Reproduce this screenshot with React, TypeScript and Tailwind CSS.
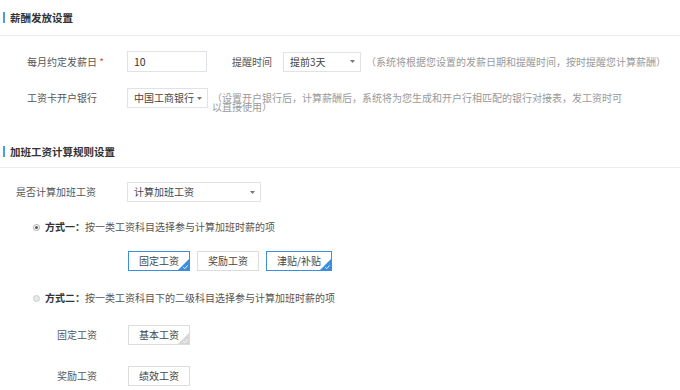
import React from 'react';

const labelCls = 'text-[10px] leading-[10px] text-[#555]';

function SectionTitle({ title, className = '' }: { title: string; className?: string }) {
  return (
    <div className={`flex items-center border-b border-[#ececec] pl-[3px] ${className}`}>
      <span className="h-[11px] w-[2px] bg-[#4a9de0]" />
      <span className="ml-[5px] text-[10.5px] font-bold leading-[11px] text-[#333]">{title}</span>
    </div>
  );
}

function Arrow() {
  return (
    <svg width="5" height="3" viewBox="0 0 5 3" className="shrink-0">
      <polygon points="0,0 5,0 2.5,3" fill="#777" />
    </svg>
  );
}

function Select({ value, width }: { value: string; width: string }) {
  return (
    <div
      className={`flex h-[20px] items-center justify-between border border-[#dfe3e8] bg-white pl-[6px] pr-[5px] ${width}`}
    >
      <span className="text-[10px] leading-[10px] text-[#444]">{value}</span>
      <Arrow />
    </div>
  );
}

function Corner({ color }: { color: string }) {
  return (
    <svg width="11" height="11" viewBox="0 0 11 11" className="absolute bottom-0 right-0">
      <polygon points="11,0 11,11 0,11" fill={color} />
      <path d="M5.2 8.3 L6.8 9.6 L9.6 6.4" stroke="#fff" strokeWidth="0.9" fill="none" />
    </svg>
  );
}

function Tag({
  text,
  state = 'off',
}: {
  text: string;
  state?: 'on' | 'off' | 'dim';
}) {
  const border = state === 'on' ? 'border-[#3c8ddc]' : 'border-[#dcdcdc]';
  return (
    <div
      className={`relative flex h-[20px] items-center justify-center border bg-white px-[10px] ${border}`}
    >
      <span className="text-[10px] leading-[10px] text-[#444]">{text}</span>
      {state === 'on' && <Corner color="#3c8ddc" />}
      {state === 'dim' && <Corner color="#d6d6d6" />}
    </div>
  );
}

function Radio({ checked }: { checked: boolean }) {
  return (
    <span
      className={`flex h-[7px] w-[7px] items-center justify-center rounded-full border ${
        checked ? 'border-[#aaa] bg-white' : 'border-[#ccc] bg-[#e8e8e8]'
      }`}
    >
      {checked && <span className="h-[3px] w-[3px] rounded-full bg-[#555]" />}
    </span>
  );
}

export default function App() {
  return (
    <div className="h-[390px] w-[680px] overflow-hidden bg-white font-['Noto_Sans_CJK_SC','Liberation_Sans',sans-serif]">
      <SectionTitle title="薪酬发放设置" className="h-[36px]" />

      {/* 每月约定发薪日 */}
      <div className="mt-[15px] flex h-[21px] items-center">
        <div className={`w-[127px] pl-[27px] ${labelCls}`}>
          每月约定发薪日 <span className="text-[#e5484d]">*</span>
        </div>
        <div className="flex h-[21px] w-[80px] items-center border border-[#dfe3e8] pl-[6px]">
          <span className="text-[10.5px] leading-[10px] text-[#333]">10</span>
        </div>
        <span className={`ml-[25px] mr-[11px] ${labelCls}`}>提醒时间</span>
        <Select value="提前3天" width="w-[78px]" />
        <span className="ml-[5px] text-[10px] leading-[10px] text-[#999]">
          （系统将根据您设置的发薪日期和提醒时间，按时提醒您计算薪酬）
        </span>
      </div>

      {/* 工资卡开户银行 */}
      <div className="mt-[16px] flex h-[20px] items-start">
        <div className={`flex h-[20px] w-[127px] items-center pl-[27px] ${labelCls}`}>工资卡开户银行</div>
        <Select value="中国工商银行" width="w-[81px]" />
        <p className="ml-[4px] mt-[5px] w-[416px] text-[10px] leading-[9px] text-[#999]">
          （设置开户银行后，计算薪酬后，系统将为您生成和开户行相匹配的银行对接表，发工资时可以直接使用）
        </p>
      </div>

      <SectionTitle title="加班工资计算规则设置" className="mt-[28px] h-[32px]" />

      {/* 是否计算加班工资 */}
      <div className="mt-[14px] flex h-[20px] items-center">
        <div className={`w-[127px] pl-[16px] ${labelCls}`}>是否计算加班工资</div>
        <Select value="计算加班工资" width="w-[134px]" />
      </div>

      {/* 方式一 */}
      <div className="mt-[18px] flex h-[14px] items-center pl-[33px]">
        <Radio checked />
        <span className="ml-[5px] text-[10px] leading-[10px] text-[#555]">
          <b className="font-bold text-[#333]">方式一：</b>按一类工资科目选择参与计算加班时薪的项
        </span>
      </div>

      <div className="mt-[17px] flex gap-[7px] pl-[128px]">
        <Tag text="固定工资" state="on" />
        <Tag text="奖励工资" />
        <Tag text="津贴/补贴" state="on" />
      </div>

      {/* 方式二 */}
      <div className="mt-[20px] flex h-[14px] items-center pl-[33px]">
        <Radio checked={false} />
        <span className="ml-[5px] text-[10px] leading-[10px] text-[#555]">
          <b className="font-bold text-[#333]">方式二：</b>按一类工资科目下的二级科目选择参与计算加班时薪的项
        </span>
      </div>

      <div className="mt-[20px] flex h-[20px] items-center">
        <div className={`w-[128px] pl-[57px] ${labelCls}`}>固定工资</div>
        <Tag text="基本工资" state="dim" />
      </div>

      <div className="mt-[21px] flex h-[20px] items-center">
        <div className={`w-[128px] pl-[57px] ${labelCls}`}>奖励工资</div>
        <Tag text="绩效工资" />
      </div>
    </div>
  );
}
